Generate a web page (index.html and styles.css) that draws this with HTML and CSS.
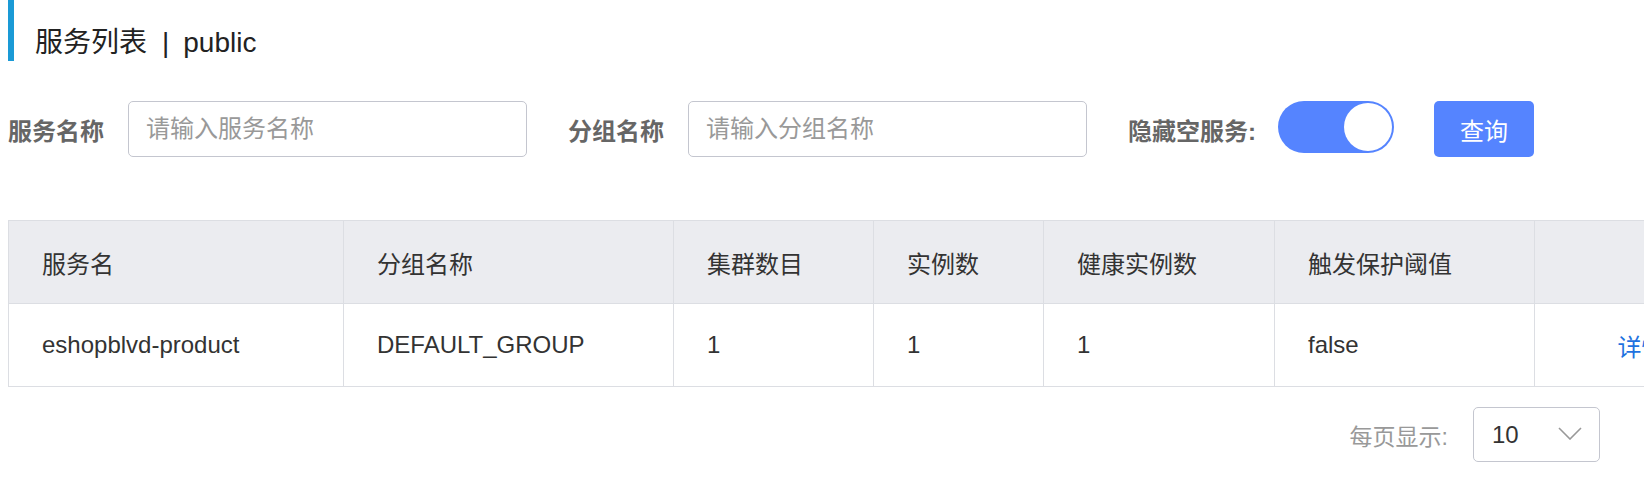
FILE: index.html
```html
<!DOCTYPE html>
<html lang="zh-CN">
<head>
<meta charset="utf-8">
<title>服务列表</title>
<link rel="stylesheet" href="styles.css">
</head>
<body>
<div class="page">
  <h1 class="page-title"><span>服务列表</span><span class="sep">|</span><span>public</span></h1>

  <form class="search">
    <label class="field-label label-1">服务名称</label>
    <input class="text-input input-1" type="text" placeholder="请输入服务名称">
    <label class="field-label label-2">分组名称</label>
    <input class="text-input" type="text" placeholder="请输入分组名称">
    <label class="field-label label-3">隐藏空服务:</label>
    <span class="switch"><span class="knob"></span></span>
    <button class="btn-primary" type="button">查询</button>
  </form>

  <div class="table-wrap">
    <table class="data-table">
      <colgroup>
        <col class="c1"><col class="c2"><col class="c3"><col class="c4"><col class="c5"><col class="c6"><col class="c7">
      </colgroup>
      <thead>
        <tr>
          <th>服务名</th>
          <th>分组名称</th>
          <th>集群数目</th>
          <th>实例数</th>
          <th>健康实例数</th>
          <th>触发保护阈值</th>
          <th class="op"></th>
        </tr>
      </thead>
      <tbody>
        <tr>
          <td>eshopblvd-product</td>
          <td>DEFAULT_GROUP</td>
          <td>1</td>
          <td>1</td>
          <td>1</td>
          <td>false</td>
          <td class="op"><a class="link" href="#">详情</a></td>
        </tr>
      </tbody>
    </table>
  </div>

  <div class="pager">
    <span class="pager-label">每页显示:</span>
    <span class="page-size">
      <span class="page-size-value">10</span>
      <svg class="chevron" width="24" height="13" viewBox="0 0 24 13"><path d="M1 1 L12 12 L23 1" fill="none" stroke="#999" stroke-width="1.6"/></svg>
    </span>
  </div>
</div>
</body>
</html>
```

FILE: styles.css
```css
html, body {
  margin: 0;
  padding: 0;
  background: #fff;
  overflow: hidden;
}

body {
  font-family: "Liberation Sans", "Noto Sans CJK SC", sans-serif;
  color: #333;
}

.page {
  width: 1644px;
  padding-left: 8px;
  box-sizing: border-box;
}

.page-title {
  margin: 0;
  height: 61px;
  box-sizing: border-box;
  border-left: 6px solid #1a9ad6;
  padding: 25px 0 0 21px;
  font-size: 28px;
  line-height: 28px;
  font-weight: normal;
  color: #222;
  display: flex;
  align-items: center;
}

.page-title .sep {
  margin: 0 14px 0 15px;
}

.search {
  display: flex;
  align-items: center;
  margin-top: 40px;
  height: 56px;
}

.field-label {
  font-size: 24px;
  font-weight: bold;
  color: #666;
  margin-right: 24px;
  white-space: nowrap;
}

.label-2 {
  margin-left: 41px;
}

.label-3 {
  margin-left: 41px;
  margin-right: 22px;
}

.text-input {
  width: 399px;
  height: 56px;
  box-sizing: border-box;
  border: 1px solid #c4c6cf;
  border-radius: 5px;
  padding: 0 17px;
  font-family: inherit;
  font-size: 24px;
  color: #333;
  outline: none;
  background: #fff;
}

.text-input::placeholder {
  color: #999;
}

.switch {
  width: 116px;
  height: 52px;
  border-radius: 26px;
  background: #5584ff;
  align-self: flex-start;
  display: flex;
  align-items: center;
  justify-content: flex-end;
  padding: 0 2px;
  box-sizing: border-box;
}

.knob {
  width: 48px;
  height: 48px;
  border-radius: 50%;
  background: #fff;
}

.btn-primary {
  margin-left: 40px;
  width: 100px;
  height: 56px;
  border: none;
  border-radius: 5px;
  background: #5584ff;
  color: #fff;
  font-family: inherit;
  font-size: 24px;
  padding: 0;
}

.table-wrap {
  margin-top: 63px;
}

.data-table {
  border-collapse: collapse;
  table-layout: fixed;
  width: 1740px;
  border: 1px solid #dcdee3;
  font-size: 24px;
  color: #333;
}

.c1 { width: 335px; }
.c2 { width: 330px; }
.c3 { width: 200px; }
.c4 { width: 170px; }
.c5 { width: 231px; }
.c6 { width: 260px; }
.c7 { width: 214px; }

.data-table th,
.data-table td {
  border: 1px solid #dcdee3;
  height: 83px;
  padding: 0 0 0 33px;
  text-align: left;
  white-space: nowrap;
  box-sizing: border-box;
}

.data-table th {
  background: #ebecf0;
  font-weight: normal;
  color: #333;
}

.data-table .op {
  text-align: center;
  padding: 0;
}

.link {
  color: #1f72e0;
  text-decoration: none;
}

.pager {
  display: flex;
  justify-content: flex-end;
  align-items: center;
  margin-top: 20px;
  padding-right: 44px;
}

.pager-label {
  font-size: 23px;
  color: #999;
  margin-right: 25px;
}

.page-size {
  width: 127px;
  height: 55px;
  box-sizing: border-box;
  border: 1px solid #c4c6cf;
  border-radius: 5px;
  display: flex;
  align-items: center;
  justify-content: space-between;
  padding: 0 17px 0 18px;
  font-size: 24px;
  color: #333;
}

.chevron {
  display: block;
  margin-top: -2px;
}
```
